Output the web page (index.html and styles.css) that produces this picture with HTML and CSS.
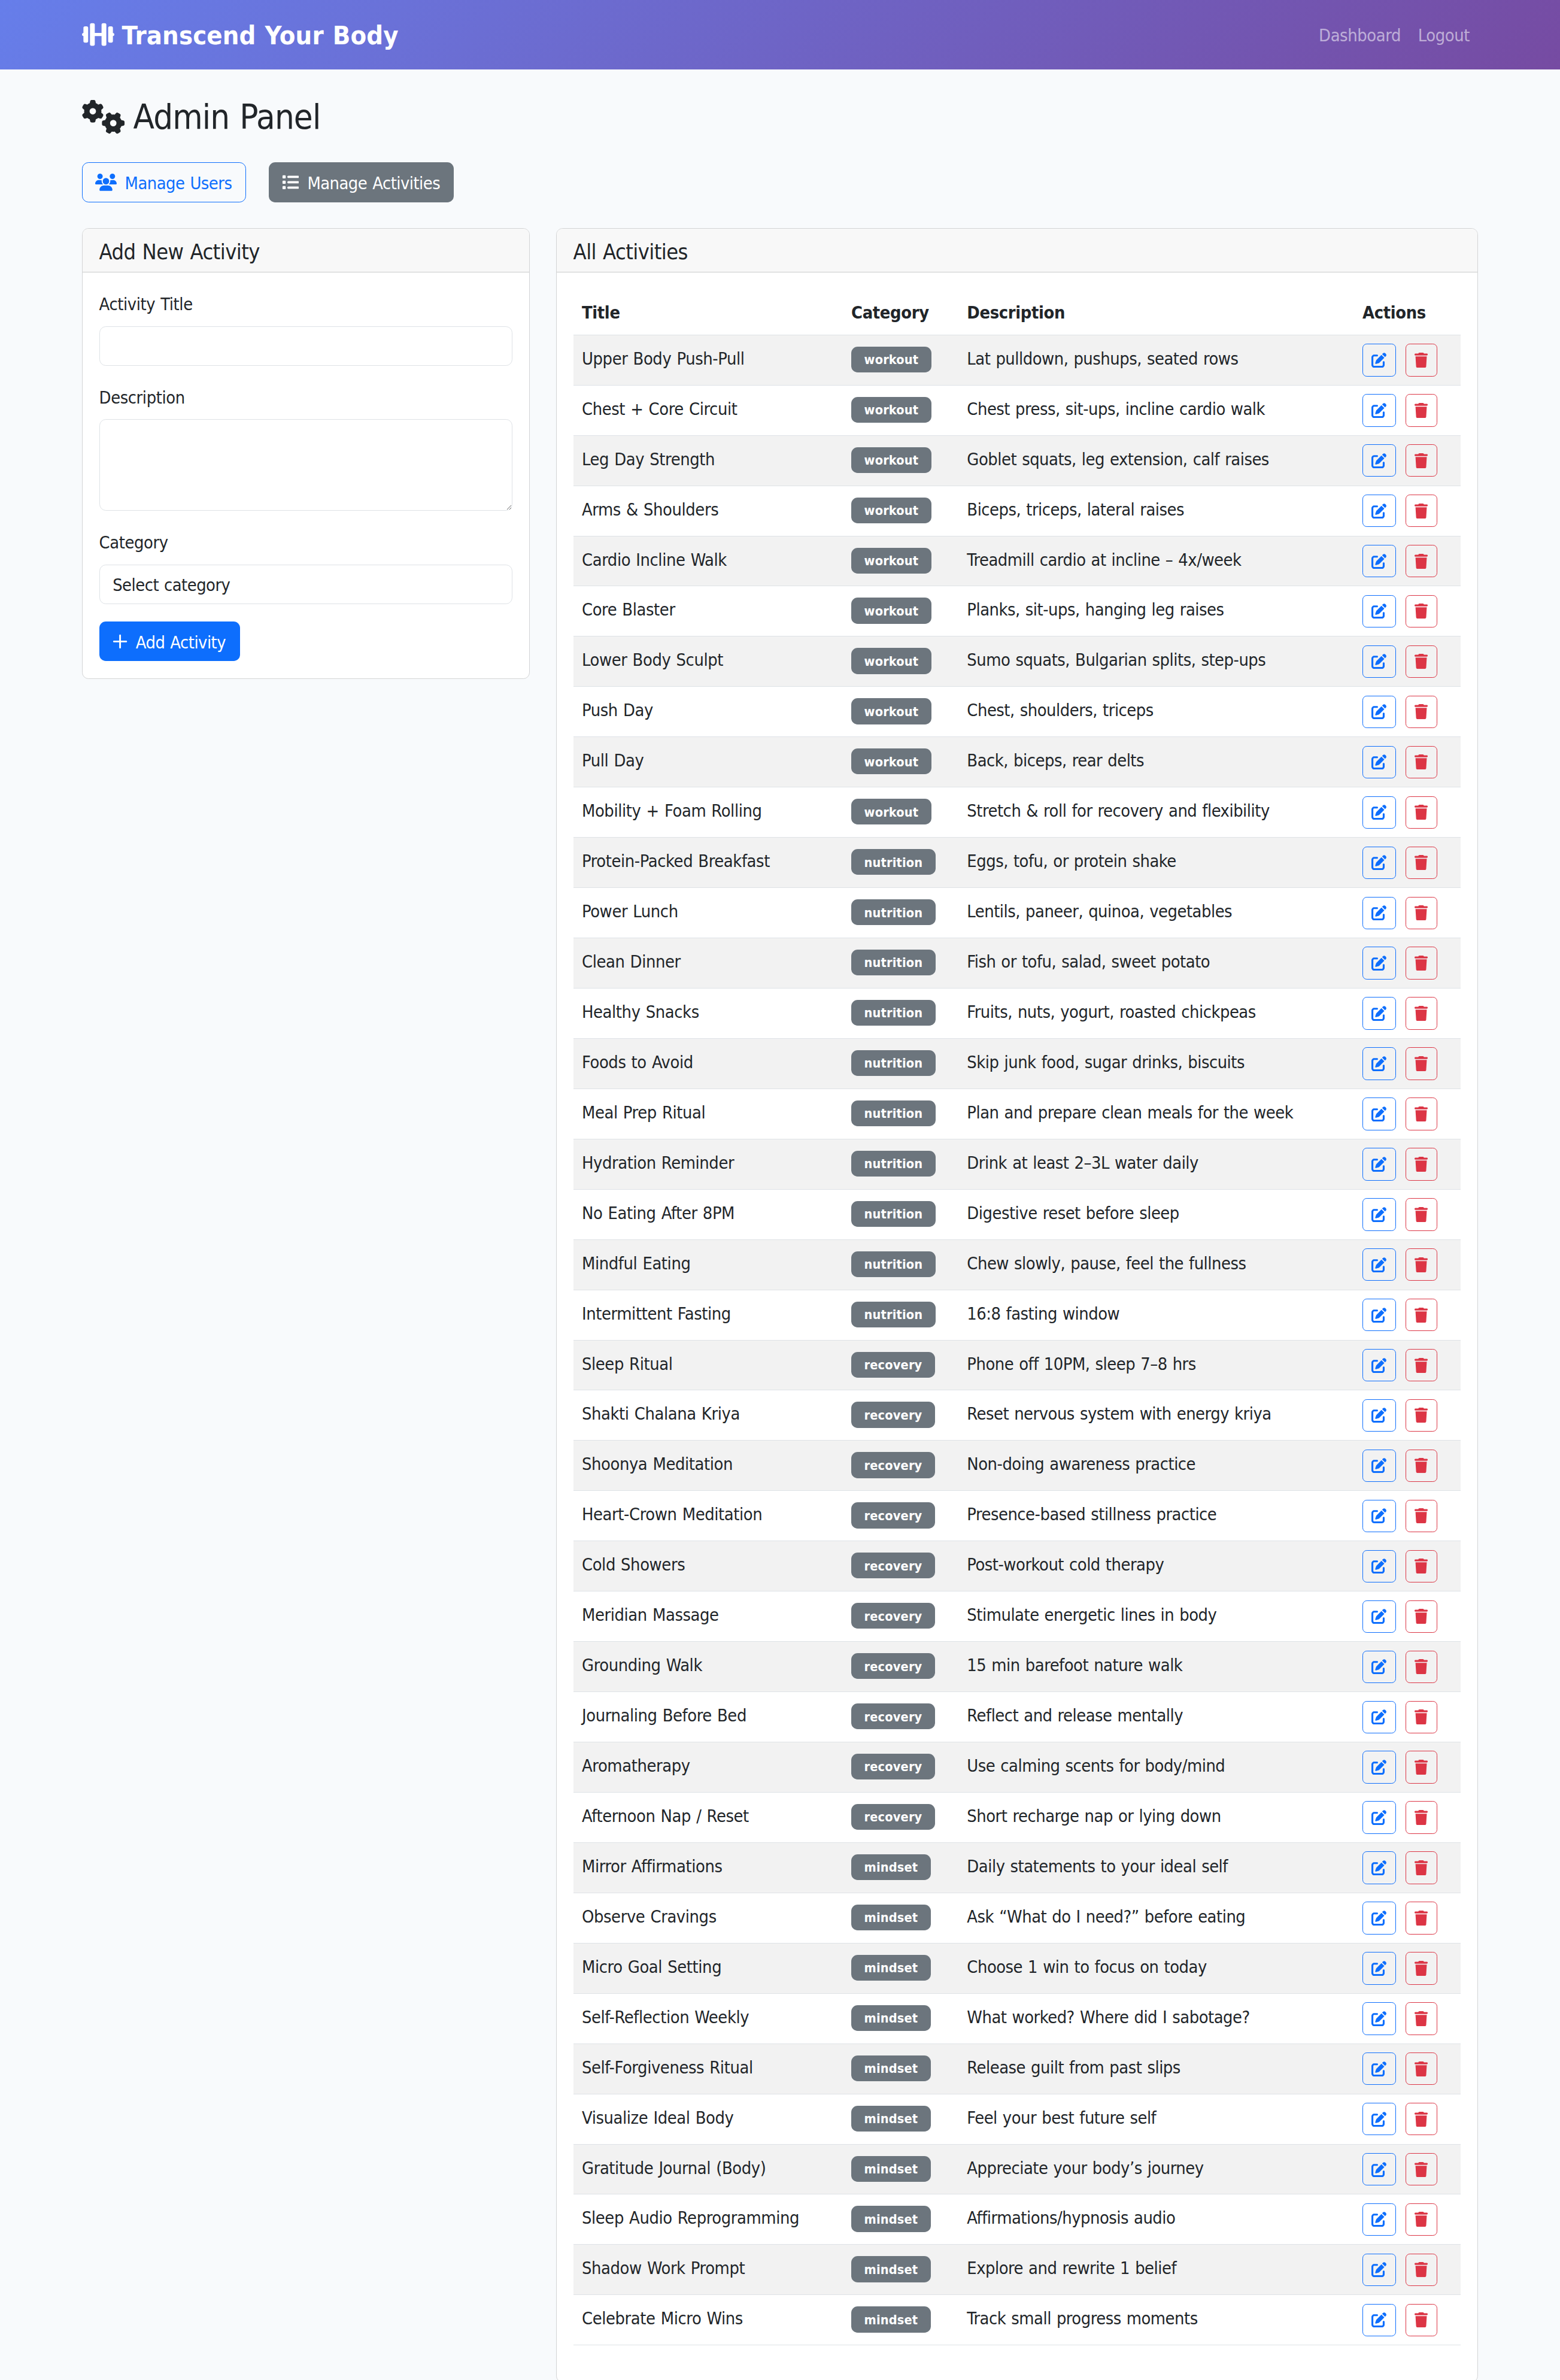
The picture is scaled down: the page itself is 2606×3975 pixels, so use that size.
FILE: index.html
```html
<!DOCTYPE html>
<html lang="en">
<head>
<meta charset="utf-8">
<title>Admin Panel</title>
<link rel="stylesheet" href="styles.css">
</head>
<body>
<svg class="sprite" xmlns="http://www.w3.org/2000/svg">
<symbol id="dumbbell" viewBox="0 0 640 512"><rect x="28" y="94" width="94" height="324" rx="32"/><rect x="158" y="33" width="95" height="446" rx="32"/><rect x="387" y="33" width="95" height="446" rx="32"/><rect x="518" y="94" width="94" height="324" rx="32"/><path d="M240 224h160v64H240zM32 224h40v64H32a32 32 0 0 1 0-64zM568 224h40a32 32 0 0 1 0 64h-40z"/></symbol>
<symbol id="edit" viewBox="0 0 512 512"><path d="M471.600 21.700c-21.900-21.900-57.300-21.900-79.200 0L362.300 51.700l97.900 97.900 30.100-30.100c21.900-21.900 21.900-57.300 0-79.200L471.600 21.700zm-299.200 220c-6.100 6.100-10.800 13.600-13.500 21.900l-29.600 88.800c-2.900 8.600-.6 18.100 5.800 24.600s15.900 8.700 24.600 5.800l88.800-29.600c8.200-2.700 15.700-7.400 21.900-13.500L437.700 172.300 339.700 74.300 172.400 241.700zM96 64C43 64 0 107 0 160v256c0 53 43 96 96 96h256c53 0 96-43 96-96v-96c0-17.700-14.300-32-32-32s-32 14.300-32 32v96c0 17.700-14.300 32-32 32H96c-17.700 0-32-14.300-32-32V160c0-17.700 14.300-32 32-32h96c17.700 0 32-14.300 32-32s-14.300-32-32-32H96z"/></symbol>
<symbol id="trash" viewBox="0 0 448 512"><path d="M135.200 17.700L128 32H32C14.300 32 0 46.300 0 64s14.300 32 32 32h384c17.700 0 32-14.300 32-32s-14.300-32-32-32h-96l-7.200-14.300C307.400 6.800 296.300 0 284.200 0H163.800c-12.100 0-23.200 6.800-28.600 17.700zM416 128H32l21.200 339c1.600 25.300 22.600 45 47.900 45h245.800c25.300 0 46.300-19.700 47.900-45L416 128z"/></symbol>
</svg>
<header class="navbar">
  <div class="container navbar-inner">
    <a class="brand"><svg class="icon i-dumbbell"><use href="#dumbbell"/></svg><span>Transcend Your Body</span></a>
    <nav class="nav"><a>Dashboard</a><a>Logout</a></nav>
  </div>
</header>
<main class="container">
  <h2 class="page-title"><svg class="icon i-gears" viewBox="0 0 640 512"><path d="M308.500 135.300c7.100-6.300 9.900-16.200 6.200-25c-2.300-5.300-4.800-10.500-7.600-15.500L304 89.400c-3-5-6.300-9.900-9.800-14.600c-5.700-7.600-15.700-10.100-24.700-7.100l-28.200 9.300c-10.700-8.800-23-16-36.200-20.900L199 27.100c-1.900-9.300-9.100-16.700-18.500-17.800C173.900 8.400 167.200 8 160.400 8h-.7c-6.800 0-13.500 .4-20.100 1.200c-9.400 1.100-16.600 8.600-18.500 17.800L115 56.100c-13.300 5-25.500 12.100-36.200 20.900L50.500 67.800c-9-3-19-.5-24.700 7.100c-3.500 4.700-6.800 9.600-9.900 14.600l-3 5.300c-2.800 5-5.300 10.200-7.600 15.600c-3.700 8.700-.9 18.600 6.200 25l22.200 19.800C32.600 161.900 32 168.900 32 176s.6 14.100 1.700 20.900L11.500 216.700c-7.100 6.300-9.900 16.200-6.200 25c2.300 5.300 4.800 10.500 7.600 15.600l3 5.200c3 5.100 6.300 9.900 9.900 14.600c5.700 7.600 15.700 10.100 24.700 7.100l28.200-9.300c10.700 8.800 23 16 36.200 20.900l6.100 29.100c1.900 9.300 9.100 16.700 18.500 17.800c6.700 .8 13.500 1.200 20.400 1.200s13.700-.4 20.400-1.200c9.400-1.100 16.600-8.600 18.500-17.800l6.100-29.100c13.300-5 25.500-12.100 36.200-20.900l28.200 9.300c9 3 19 .5 24.700-7.100c3.500-4.700 6.800-9.500 9.800-14.600l3.100-5.400c2.800-5 5.300-10.200 7.600-15.500c3.700-8.700 .9-18.600-6.200-25l-22.200-19.800c1.100-6.800 1.700-13.800 1.700-20.900s-.6-14.100-1.700-20.900l22.200-19.800zM112 176a48 48 0 1 1 96 0 48 48 0 1 1 -96 0zM504.700 500.500c6.300 7.100 16.200 9.900 25 6.200c5.300-2.300 10.500-4.800 15.500-7.600l5.400-3.100c5-3 9.900-6.300 14.600-9.800c7.600-5.700 10.100-15.700 7.100-24.700l-9.300-28.200c8.800-10.700 16-23 20.900-36.200l29.100-6.100c9.300-1.900 16.700-9.100 17.800-18.500c.8-6.700 1.200-13.500 1.200-20.400s-.4-13.700-1.200-20.400c-1.100-9.400-8.600-16.600-17.800-18.500L583.900 307c-5-13.300-12.100-25.500-20.900-36.200l9.300-28.200c3-9 .5-19-7.100-24.700c-4.700-3.500-9.600-6.800-14.600-9.900l-5.300-3c-5-2.800-10.200-5.300-15.600-7.600c-8.700-3.700-18.600-.9-25 6.200l-19.800 22.200c-6.800-1.100-13.800-1.700-20.900-1.700s-14.100 .6-20.900 1.700l-19.800-22.200c-6.300-7.100-16.200-9.900-25-6.200c-5.300 2.300-10.500 4.800-15.600 7.600l-5.200 3c-5.100 3-9.900 6.300-14.600 9.900c-7.600 5.700-10.100 15.700-7.100 24.700l9.300 28.200c-8.800 10.700-16 23-20.900 36.200L315.100 313c-9.300 1.900-16.700 9.100-17.800 18.500c-.8 6.700-1.200 13.500-1.200 20.400s.4 13.700 1.200 20.400c1.100 9.400 8.600 16.600 17.800 18.500l29.100 6.100c5 13.300 12.100 25.500 20.900 36.200l-9.300 28.200c-3 9-.5 19 7.100 24.700c4.700 3.500 9.500 6.800 14.600 9.800l5.400 3.100c5 2.800 10.200 5.300 15.500 7.600c8.700 3.700 18.600 .9 25-6.200l19.800-22.200c6.800 1.100 13.800 1.700 20.900 1.700s14.100-.6 20.900-1.700l19.800 22.200zM464 304a48 48 0 1 1 0 96 48 48 0 1 1 0-96z"/></svg><span>Admin Panel</span></h2>
  <div class="tabs">
    <a class="btn btn-outline"><svg class="icon i-users" viewBox="0 0 640 512"><path d="M144 0a80 80 0 1 1 0 160A80 80 0 1 1 144 0zM512 0a80 80 0 1 1 0 160A80 80 0 1 1 512 0zM0 298.700C0 239.800 47.800 192 106.700 192h42.700c15.900 0 31 3.500 44.600 9.700c-1.300 7.200-1.900 14.700-1.900 22.300c0 38.200 16.800 72.500 43.300 96H21.300C9.600 320 0 310.400 0 298.700zM405.300 320h-.7c26.600-23.500 43.300-57.800 43.300-96c0-7.600-.7-15-1.900-22.300c13.600-6.300 28.700-9.700 44.600-9.700h42.700C592.200 192 640 239.800 640 298.700c0 11.800-9.600 21.300-21.300 21.300H405.300zM224 224a96 96 0 1 1 192 0 96 96 0 1 1 -192 0zM128 485.300C128 411.700 187.700 352 261.300 352h117.300C452.300 352 512 411.700 512 485.300c0 14.700-11.900 26.700-26.700 26.700H154.700c-14.700 0-26.700-11.900-26.700-26.700z"/></svg><span>Manage Users</span></a>
    <a class="btn btn-gray"><svg class="icon i-square" viewBox="0 0 512 512"><path d="M40 48C26.700 48 16 58.700 16 72v48c0 13.300 10.700 24 24 24h48c13.300 0 24-10.700 24-24V72c0-13.300-10.700-24-24-24H40zM192 64c-17.700 0-32 14.300-32 32s14.300 32 32 32h288c17.700 0 32-14.300 32-32s-14.300-32-32-32H192zm0 160c-17.700 0-32 14.300-32 32s14.300 32 32 32h288c17.700 0 32-14.300 32-32s-14.300-32-32-32H192zm0 160c-17.700 0-32 14.300-32 32s14.300 32 32 32h288c17.700 0 32-14.300 32-32s-14.300-32-32-32H192zM16 232v48c0 13.300 10.700 24 24 24h48c13.300 0 24-10.700 24-24v-48c0-13.300-10.700-24-24-24H40c-13.300 0-24 10.700-24 24zm24 136c-13.300 0-24 10.700-24 24v48c0 13.300 10.700 24 24 24h48c13.300 0 24-10.700 24-24v-48c0-13.300-10.700-24-24-24H40z"/></svg><span>Manage Activities</span></a>
  </div>
  <div class="columns">
    <section class="card">
      <h5 class="card-header">Add New Activity</h5>
      <form class="form">
        <label for="title">Activity Title</label>
        <input class="control" id="title" type="text">
        <label for="desc">Description</label>
        <textarea class="control area" id="desc"></textarea>
        <label for="cat">Category</label>
        <select class="control select" id="cat"><option>Select category</option></select>
        <button class="btn btn-primary" type="button"><svg class="icon i-plus" viewBox="0 0 448 512"><path d="M224 74v364M42 256h364" fill="none" stroke="currentColor" stroke-width="52" stroke-linecap="round"/></svg><span>Add Activity</span></button>
      </form>
    </section>
    <section class="card">
      <h5 class="card-header">All Activities</h5>
      <div class="table-wrap">
        <table class="table">
          <colgroup><col class="c-title"><col class="c-cat"><col class="c-desc"><col class="c-act"></colgroup>
          <thead><tr><th>Title</th><th>Category</th><th>Description</th><th>Actions</th></tr></thead>
          <tbody id="rows"></tbody>
        </table>
      </div>
    </section>
  </div>
</main>
<script src="script.js"></script>
</body>
</html>
```
FILE: script.js
```js
const activities = {
  workout: [
    ["Upper Body Push-Pull", "Lat pulldown, pushups, seated rows"],
    ["Chest + Core Circuit", "Chest press, sit-ups, incline cardio walk"],
    ["Leg Day Strength", "Goblet squats, leg extension, calf raises"],
    ["Arms & Shoulders", "Biceps, triceps, lateral raises"],
    ["Cardio Incline Walk", "Treadmill cardio at incline – 4x/week"],
    ["Core Blaster", "Planks, sit-ups, hanging leg raises"],
    ["Lower Body Sculpt", "Sumo squats, Bulgarian splits, step-ups"],
    ["Push Day", "Chest, shoulders, triceps"],
    ["Pull Day", "Back, biceps, rear delts"],
    ["Mobility + Foam Rolling", "Stretch & roll for recovery and flexibility"]
  ],
  nutrition: [
    ["Protein-Packed Breakfast", "Eggs, tofu, or protein shake"],
    ["Power Lunch", "Lentils, paneer, quinoa, vegetables"],
    ["Clean Dinner", "Fish or tofu, salad, sweet potato"],
    ["Healthy Snacks", "Fruits, nuts, yogurt, roasted chickpeas"],
    ["Foods to Avoid", "Skip junk food, sugar drinks, biscuits"],
    ["Meal Prep Ritual", "Plan and prepare clean meals for the week"],
    ["Hydration Reminder", "Drink at least 2–3L water daily"],
    ["No Eating After 8PM", "Digestive reset before sleep"],
    ["Mindful Eating", "Chew slowly, pause, feel the fullness"],
    ["Intermittent Fasting", "16:8 fasting window"]
  ],
  recovery: [
    ["Sleep Ritual", "Phone off 10PM, sleep 7–8 hrs"],
    ["Shakti Chalana Kriya", "Reset nervous system with energy kriya"],
    ["Shoonya Meditation", "Non-doing awareness practice"],
    ["Heart-Crown Meditation", "Presence-based stillness practice"],
    ["Cold Showers", "Post-workout cold therapy"],
    ["Meridian Massage", "Stimulate energetic lines in body"],
    ["Grounding Walk", "15 min barefoot nature walk"],
    ["Journaling Before Bed", "Reflect and release mentally"],
    ["Aromatherapy", "Use calming scents for body/mind"],
    ["Afternoon Nap / Reset", "Short recharge nap or lying down"]
  ],
  mindset: [
    ["Mirror Affirmations", "Daily statements to your ideal self"],
    ["Observe Cravings", "Ask “What do I need?” before eating"],
    ["Micro Goal Setting", "Choose 1 win to focus on today"],
    ["Self-Reflection Weekly", "What worked? Where did I sabotage?"],
    ["Self-Forgiveness Ritual", "Release guilt from past slips"],
    ["Visualize Ideal Body", "Feel your best future self"],
    ["Gratitude Journal (Body)", "Appreciate your body’s journey"],
    ["Sleep Audio Reprogramming", "Affirmations/hypnosis audio"],
    ["Shadow Work Prompt", "Explore and rewrite 1 belief"],
    ["Celebrate Micro Wins", "Track small progress moments"]
  ]
};

const escape = (text) => text.replace(/&/g, "&amp;");

document.getElementById("rows").innerHTML = Object.entries(activities)
  .flatMap(([category, items]) => items.map(([title, description]) => `
    <tr>
      <td>${escape(title)}</td>
      <td class="cell-badge"><span class="badge">${category}</span></td>
      <td class="cell-desc">${escape(description)}</td>
      <td class="cell-actions"><div class="actions">
        <button class="btn-sm edit" aria-label="Edit"><svg class="icon"><use href="#edit"/></svg></button>
        <button class="btn-sm delete" aria-label="Delete"><svg class="icon"><use href="#trash"/></svg></button>
      </div></td>
    </tr>`))
  .join("");
```
FILE: styles.css
```css
* { box-sizing: border-box; }
html { font-size: 28.8px; }
body {
  margin: 0;
  background: #f8fafc;
  color: #212529;
  font-family: "DejaVu Sans Condensed", "DejaVu Sans", sans-serif;
  font-stretch: condensed;
  line-height: 1.5;
  letter-spacing: -.014em;
  word-spacing: .045em;
  height: 3975px;
  overflow: hidden;
}
button, input, select, textarea { font: inherit; letter-spacing: inherit; word-spacing: inherit; color: inherit; }
.sprite { display: none; }
.icon { fill: currentColor; flex: none; display: block; height: 1em; }
.container { width: 2376px; margin: 0 auto; padding: 0 21.6px; }

.navbar { height: 116px; background: linear-gradient(135deg, #667eea 0%, #764ba2 100%); }
.navbar-inner { height: 100%; display: flex; align-items: center; justify-content: space-between; }
.brand { display: flex; align-items: center; gap: 13px; color: #fff; font-size: 1.5rem; font-weight: 700; letter-spacing: .003em; }
.brand span { padding-top: 2px; }
.i-dumbbell { width: 1.25em; }
.nav { display: flex; gap: 28.8px; padding: 3px 14.4px 0 0; color: rgba(255, 255, 255, .55); letter-spacing: -.014em; }

.page-title { display: flex; align-items: center; gap: 14px; height: 70px; margin: 43px 0 0; padding-top: 2px; font-size: 2rem; font-weight: 400; line-height: 1.2; letter-spacing: -.015em; }
.page-title span { padding-top: 2px; }
.i-gears { width: 1.25em; }
.tabs { display: flex; gap: 38px; margin-top: 42px; }
.btn { display: inline-flex; align-items: center; gap: 14px; height: 67px; padding: 0 21px; border: 1px solid transparent; border-radius: .375rem; letter-spacing: -.018em; white-space: nowrap; }
.btn span { padding-top: 4px; }
.btn-outline { width: 274px; color: #0d6efd; border-color: #0d6efd; }
.btn-gray { width: 309px; color: #fff; background: #6c757d; }
.i-users { width: 1.25em; }
.i-square { width: 1em; }
.i-plus { width: .875em; }

.columns { display: grid; grid-template-columns: 748.8px 1540px; gap: 43.2px; align-items: start; margin-top: 43px; }
.card { background: #fff; border: 1px solid #d3d4d5; border-radius: .375rem; overflow: hidden; }
.card-header { margin: 0; height: 73px; padding: 17px 28px 0; font-size: 1.25rem; font-weight: 400; line-height: 1.2; letter-spacing: -.016em; background: #f8f8f8; border-bottom: 1px solid #c9cacb; }
.form { display: flex; flex-direction: column; align-items: flex-start; padding: 31px 28px 28.8px; }
.form label { height: 43px; margin-bottom: 15.5px; padding-top: 1px; }
.control { display: block; width: 100%; height: 66px; margin: 0 0 31.3px; padding: 0 21.6px; border: 1px solid #dee2e6; border-radius: .375rem; background: #fff; outline: 0; }
.area { height: 152.6px; resize: vertical; }
.select { appearance: none; height: 66.6px; margin-bottom: 29px; padding-top: 4px; letter-spacing: -.018em; }
.btn-primary { width: 235px; height: 66px; background: #0d6efd; color: #fff; }

.table-wrap { padding: 28.8px 28px 61px; }
.table { width: 1482.4px; table-layout: fixed; border-collapse: separate; border-spacing: 0; }
.c-title { width: 450px; }
.c-cat { width: 193.4px; }
.c-desc { width: 660.6px; }
th { height: 76px; padding: 2px 14.4px 0; text-align: left; font-weight: 700; letter-spacing: -.012em; border-bottom: 1px solid #dee2e6; }
td { height: 83.95px; padding: 18px 14.4px 0; vertical-align: top; white-space: nowrap; border-bottom: 1px solid #dee2e6; }
tbody tr:nth-child(odd) { background: #f2f2f2; }
.cell-badge { padding-top: 19px; }
.cell-desc { letter-spacing: -.017em; }
.badge { display: block; width: max-content; padding: .53em 1em .47em; font-size: .75rem; font-weight: 700; line-height: 1; letter-spacing: .007em; color: #fff; background: #6c757d; border-radius: .375rem; }
.cell-actions { padding-top: 14.4px; }
.actions { display: flex; gap: 16px; }
.btn-sm { display: flex; align-items: center; justify-content: center; height: 54.4px; padding: 0; font-size: .875rem; background: transparent; border: 1px solid; border-radius: .25rem; }
.edit { width: 56px; color: #0d6efd; }
.edit .icon { width: 1em; }
.delete { width: 53px; color: #dc3545; }
.delete .icon { width: .875em; }
```
